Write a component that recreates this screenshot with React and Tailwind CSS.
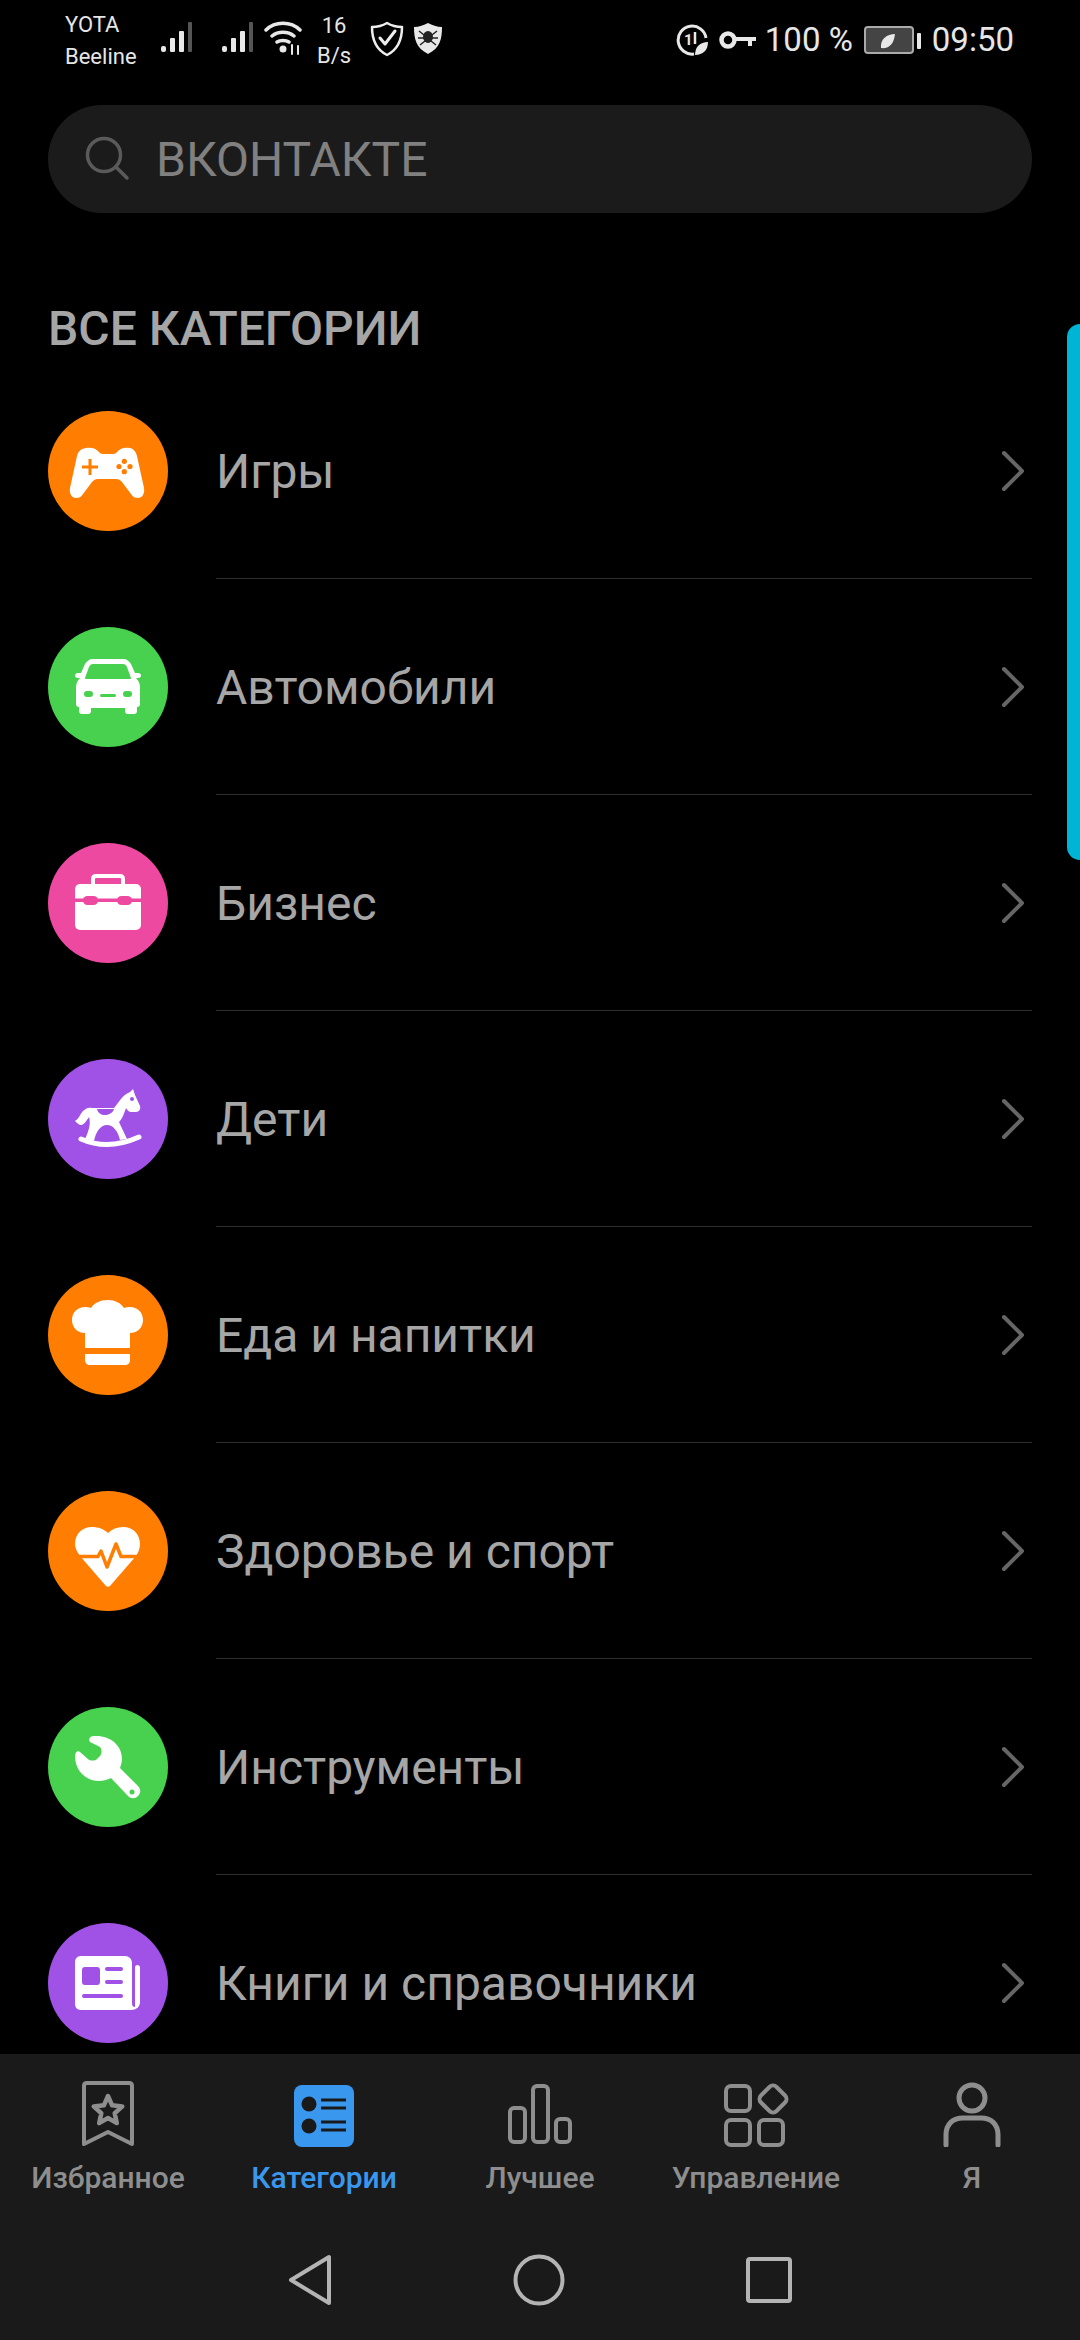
const CATEGORIES = [
  { label: 'Игры', color: 'bg-[#ff7d00]', tint: '#ff7d00', icon: 'game' },
  { label: 'Автомобили', color: 'bg-[#47d14e]', tint: '#47d14e', icon: 'car' },
  { label: 'Бизнес', color: 'bg-[#ee49a0]', tint: '#ee49a0', icon: 'case' },
  { label: 'Дети', color: 'bg-[#a052e6]', tint: '#a052e6', icon: 'horse' },
  { label: 'Еда и напитки', color: 'bg-[#ff7d00]', tint: '#ff7d00', icon: 'chef' },
  { label: 'Здоровье и спорт', color: 'bg-[#ff7d00]', tint: '#ff7d00', icon: 'heart' },
  { label: 'Инструменты', color: 'bg-[#47d14e]', tint: '#47d14e', icon: 'wrench' },
  { label: 'Книги и справочники', color: 'bg-[#a052e6]', tint: '#a052e6', icon: 'news' },
]

function CategoryIcon({ name, tint }) {
  if (name === 'game') return (
    <svg viewBox="0 0 120 120" className="w-full h-full">
      <path fill="#fff" d="M38 37c5-1 10 0 13 4 1 1 2 2 4 2h10c2 0 3-1 4-2 3-4 8-5 13-4 4 1 6 4 7 8l7 32c1 6-2 10-6 10-3 0-5-1-7-4l-9-12c-2-2-3-3-6-3H50c-3 0-4 1-6 3l-9 12c-2 3-4 4-7 4-4 0-7-4-6-10l7-32c1-4 3-7 9-8z" />
      <path stroke={tint} strokeWidth="3" d="M34 56h16M42 48v16" />
      <circle cx="76.300" cy="50.300" r="2.600" fill={tint} /><circle cx="76.300" cy="60.700" r="2.600" fill={tint} />
      <circle cx="71" cy="55.500" r="2.600" fill={tint} /><circle cx="82" cy="55.500" r="2.600" fill={tint} />
    </svg>
  )
  if (name === 'car') return (
    <svg viewBox="0 0 120 120" className="w-full h-full">
      <path fill="#fff" d="M45 32H75C79 32 81 34 83 37L87 46H90C92 46 93 47 93 48.500C93 50 92 51 90 51H88C90 53 92 56 92 60V77C92 79 91 80 89 80V84C89 86 88 87 86 87H80C78 87 77 86 77 84V81H43V84C43 86 42 87 40 87H34C32 87 31 86 31 84V80C29 80 28 79 28 77V60C28 56 30 53 32 51H30C28 51 27 50 27 48.500C27 47 28 46 30 46H33L37 37C39 34 41 32 45 32Z" />
      <path fill={tint} d="M45 37C43 37 42 38 41 40L37 51C37 52 38 52 38 52H82C83 52 83 51 83 51L79 40C78 38 77 37 75 37Z" />
      <rect x="36" y="64" width="9" height="6" rx="3" fill={tint} />
      <rect x="75" y="64" width="9" height="6" rx="3" fill={tint} />
      <rect x="52" y="67" width="16" height="3" rx="1.500" fill={tint} />
    </svg>
  )
  if (name === 'case') return (
    <svg viewBox="0 0 120 120" className="w-full h-full">
      <path fill="none" stroke="#fff" strokeWidth="4" d="M45 42V36c0-2 1-3 3-3h24c2 0 3 1 3 3v6" />
      <rect x="27" y="41" width="66" height="46" rx="5" fill="#fff" />
      <rect x="27" y="55.500" width="66" height="3.500" fill={tint} />
      <rect x="35" y="53" width="15" height="9" rx="4.500" fill={tint} />
      <rect x="69" y="53" width="15" height="9" rx="4.500" fill={tint} />
    </svg>
  )
  if (name === 'horse') return (
    <svg viewBox="0 0 120 120" className="w-full h-full">
      <path fill="#fff" d="M85 30L87 36L92 47C93 50 91 53 88 53H83C81 53 79 51 78 49C76 55 74 60 71 63L79 80L72 81C70 72 65 66 59 66C53 66 48 72 46 82L37 80C41 72 43 64 41 58C39 61 36 66 33 66C31 66 29 64 27 62C31 60 32 55 35 52C38 49 41 48 44 49H66C69 46 74 36 82 33Z" />
      <path fill={tint} d="M49 50H66C65 54 60 56 57 56C53 56 50 54 49 50Z" />
      <circle cx="84" cy="40" r="2" fill={tint} />
      <path fill="none" stroke="#fff" strokeWidth="5" strokeLinecap="round" d="M33 80Q60 92 91 78" />
    </svg>
  )
  if (name === 'chef') return (
    <svg viewBox="0 0 120 120" className="w-full h-full">
      <path fill="#fff" d="M37 73V58C29 58 24 52 24 45C24 37 30 32 37 32C39 32 41 32 43 33C46 28 52 25 60 25C67 25 73 28 76 33C78 32 80 32 82 32C89 32 95 37 95 45C95 52 90 58 82 58V73Z" />
      <path fill="#fff" d="M37 79H82V85C82 88 80 90 77 90H42C39 90 37 88 37 85Z" />
    </svg>
  )
  if (name === 'heart') return (
    <svg viewBox="0 0 120 120" className="w-full h-full">
      <path fill="#fff" d="M60 42C64 38 69 36 75 36C85 36 92 43 92 53C92 58 90 62 88 65L62 95C61 96 59 96 58 95L32 65C29 61 27 57 27 53C27 43 34 36 44 36C50 36 56 38 60 42Z" />
      <path fill="none" stroke={tint} strokeWidth="3.500" strokeLinejoin="round" d="M20 65.500H50L53 60L59 76L68 53L73 65.500H100" />
    </svg>
  )
  if (name === 'wrench') return (
    <svg viewBox="0 0 120 120" className="w-full h-full">
      <path fill="#fff" d="M42 35C40 32 42 29 46 29C62 28 74 38 74 52C74 55 73 58 72 61L90 79C93 82 93 86 90 89C87 92 83 92 80 89L63 71C59 73 55 74 51 74C37 74 27 63 27 49C27 45 30 43 32 45L40 52C42 54 47 54 49 52L52 49C54 47 54 42 52 40Z" />
      <circle cx="84" cy="85" r="2.500" fill={tint} />
    </svg>
  )
  return (
    <svg viewBox="0 0 120 120" className="w-full h-full">
      <path fill="#fff" d="M33 33H77C81 33 84 36 84 40V80C84 83 85 84 87 84C87 80 87 46 87 44.500C87 43 88 42 89.500 42C91 42 92 43 92 44.500V79C92 84 88 87 83 87H33C29 87 27 84 27 81V39C27 36 29 33 33 33Z" />
      <rect x="34" y="44" width="18" height="18" rx="3" fill={tint} />
      <rect x="57" y="44" width="18" height="4" rx="2" fill={tint} />
      <rect x="57" y="57" width="18" height="4" rx="2" fill={tint} />
      <rect x="34" y="71" width="41" height="4" rx="2" fill={tint} />
    </svg>
  )
}

function Signal() {
  return (
    <svg width="32" height="32" viewBox="0 0 32 32">
      <rect x="0" y="24" width="5" height="6" rx="2" fill="#e8e8e8" />
      <rect x="9" y="16" width="5" height="14" rx="1" fill="#e8e8e8" />
      <rect x="18" y="9" width="5" height="21" rx="1" fill="#e8e8e8" />
      <rect x="27" y="0" width="4" height="30" rx="1" fill="#555" />
    </svg>
  )
}

function StatusBar() {
  return (
    <div className="h-[105px] flex items-start justify-between pl-[65px] pr-[66px] pt-[9px] text-[#e6e6e6] shrink-0">
      <div className="flex items-start">
        <div className="text-[22px] leading-[32px] w-[90px]">
          <div>YOTA</div>
          <div>Beeline</div>
        </div>
        <div className="flex items-start pt-[13px] ml-[6px]">
          <Signal />
          <div className="w-[29px]" />
          <Signal />
          <svg width="38" height="34" viewBox="0 0 38 34" className="ml-[10px] mt-[-1px]" fill="none" stroke="#e8e8e8" strokeWidth="3.500" strokeLinecap="round">
            <path d="M2 9c9-9 25-9 34 0M8 15c6-5 16-5 22 0M13 21c3-2 9-2 12 0" />
            <circle cx="19" cy="28" r="3.500" fill="#e8e8e8" stroke="none" />
            <path strokeWidth="2" d="M28 24v9M34 25v8" />
          </svg>
        </div>
        <div className="text-[22px] leading-[30px] text-center w-[50px] ml-[7px] pt-[2px]">
          <div>16</div>
          <div>B/s</div>
        </div>
        <svg width="34" height="36" viewBox="0 0 34 36" className="ml-[11px] mt-[12px]" fill="none" stroke="#eee" strokeWidth="2.500" strokeLinecap="round" strokeLinejoin="round">
          <path d="M17 2c5 3 10 4 15 4 0 12-3 22-15 28C5 28 2 18 2 6c5 0 10-1 15-4z" />
          <path strokeWidth="3" d="M10 17l5 6 10-13" />
        </svg>
        <svg width="30" height="32" viewBox="0 0 28 32" className="ml-[9px] mt-[13px]">
          <path fill="#e8e8e8" d="M14 1c4 2 9 4 14 4 0 12-2 21-14 27C2 26 0 17 0 5c5 0 10-2 14-4z" />
          <ellipse cx="14" cy="15" rx="5" ry="6" fill="#222" />
          <path stroke="#222" strokeWidth="1.500" d="M5 9l5 4M23 9l-5 4M4 16h6M24 16h-6M6 23l5-4M22 23l-5-4" />
        </svg>
      </div>
      <div className="flex items-center pt-[12px] h-[50px]">
        <svg width="32" height="32" viewBox="0 0 32 32" fill="none" className="mr-[11px]">
          <path stroke="#e8e8e8" strokeWidth="3" d="M18 30A14 14 0 1 1 30 14" />
          <text x="8" y="21" fontSize="15" fill="#e8e8e8" fontFamily="Roboto, sans-serif" fontWeight="700">1</text>
          <path stroke="#e8e8e8" strokeWidth="2.500" d="M19 8v12" />
          <path fill="#e8e8e8" d="M19 31c0-8 5-13 13-13 0 8-5 13-13 13z" />
        </svg>
        <svg width="38" height="20" viewBox="0 0 38 20" fill="none" className="mr-[8px]">
          <circle cx="9" cy="10" r="6.500" stroke="#e8e8e8" strokeWidth="4.500" />
          <path stroke="#e8e8e8" strokeWidth="4" d="M15 9h22M31 9v7" />
        </svg>
        <span className="text-[33px] leading-[40px] mr-[11px]">100 %</span>
        <svg width="57" height="30" viewBox="0 0 57 30" fill="none" className="mr-[11px]">
          <rect x="1" y="2" width="48" height="26" rx="3" fill="#444" stroke="#aaa" strokeWidth="2" />
          <rect x="53" y="8" width="4" height="16" rx="1" fill="#e8e8e8" />
          <path fill="#e8e8e8" d="M17 23c-1-9 6-14 14-14-1 10-6 15-14 14z" />
        </svg>
        <span className="text-[33px] leading-[40px]">09:50</span>
      </div>
    </div>
  )
}

function CategoryRow({ item }) {
  return (
    <div className="h-[216px] flex items-stretch shrink-0">
      <div className="w-[168px] pl-[48px] flex items-center shrink-0">
        <div className={`w-[120px] h-[120px] rounded-full ${item.color}`}>
          <CategoryIcon name={item.icon} tint={item.tint} />
        </div>
      </div>
      <div className="flex-1 ml-[48px] mr-[48px] flex items-center justify-between border-b border-[#303030]">
        <span className="text-[48px] text-[#a6a6a6] pt-[2px]">{item.label}</span>
        <svg width="24" height="42" viewBox="0 0 24 42" fill="none" stroke="#666" strokeWidth="4" strokeLinecap="round" strokeLinejoin="round" className="mr-[7px]">
          <path d="M3 3L21 21L3 39" />
        </svg>
      </div>
    </div>
  )
}

const TABS = [
  { label: 'Избранное', icon: 'star' },
  { label: 'Категории', icon: 'list', active: true },
  { label: 'Лучшее', icon: 'bars' },
  { label: 'Управление', icon: 'apps' },
  { label: 'Я', icon: 'user' },
]

function TabIcon({ name }) {
  const common = { width: 66, height: 66, viewBox: '0 0 66 66', fill: 'none', stroke: '#8e8e8e', strokeWidth: 4, strokeLinejoin: 'round', strokeLinecap: 'round' }
  if (name === 'star') return (
    <svg {...common}>
      <path d="M12 2h42c2 0 3 1 3 3v58L33 51 9 63V5c0-2 1-3 3-3z" />
      <path strokeWidth="4.500" d="M33 15L37.100 24.300L47.300 25.400L39.700 32.200L41.800 42.100L33 37L24.200 42.100L26.300 32.200L18.700 25.400L28.900 24.300Z" />
    </svg>
  )
  if (name === 'list') return (
    <svg width="66" height="66" viewBox="0 0 66 66">
      <rect x="3" y="4" width="60" height="62" rx="8" fill="#3a97ee" />
      <circle cx="18" cy="23" r="7.500" fill="#1a1a1a" /><circle cx="18" cy="45" r="7.500" fill="#1a1a1a" />
      <path stroke="#1a1a1a" strokeWidth="3" d="M30 19h25M30 27h25M30 41h25M30 49h25" />
    </svg>
  )
  if (name === 'bars') return (
    <svg {...common}>
      <rect x="3" y="27" width="15" height="34" rx="4" />
      <rect x="26" y="5" width="15" height="56" rx="4" />
      <rect x="49" y="38" width="14" height="23" rx="4" />
    </svg>
  )
  if (name === 'apps') return (
    <svg {...common}>
      <rect x="3" y="5" width="24" height="25" rx="5" />
      <rect x="3" y="39" width="24" height="25" rx="5" />
      <rect x="36" y="39" width="24" height="25" rx="5" />
      <rect x="39" y="7" width="22" height="22" rx="5" transform="rotate(45 50 18)" />
    </svg>
  )
  return (
    <svg {...common} strokeWidth="5">
      <circle cx="33" cy="17" r="13" />
      <path d="M7 64V54c0-11 7-17 17-17h18c10 0 17 6 17 17v10" />
    </svg>
  )
}

function BottomBar() {
  return (
    <div className="h-[286px] bg-[#1a1a1a] shrink-0 flex flex-col">
      <div className="flex h-[124px] mt-[27px]">
        {TABS.map((t) => (
          <div key={t.label} className="flex-1 flex flex-col items-center">
            <TabIcon name={t.icon} />
            <span className={`text-[30px] leading-[36px] mt-[13px] font-medium ${t.active ? 'text-[#3a97ee]' : 'text-[#8e8e8e]'}`}>{t.label}</span>
          </div>
        ))}
      </div>
      <div className="flex justify-center items-center gap-[181px] mt-[49px]">
        <svg width="44" height="52" viewBox="0 0 44 52" fill="none" stroke="#b4b4b4" strokeWidth="4" strokeLinejoin="round"><path d="M41 3v46L3 26z" /></svg>
        <svg width="52" height="52" viewBox="0 0 52 52" fill="none" stroke="#b4b4b4" strokeWidth="4"><circle cx="26" cy="26" r="23.500" /></svg>
        <svg width="46" height="46" viewBox="0 0 46 46" fill="none" stroke="#b4b4b4" strokeWidth="4" strokeLinejoin="round"><rect x="2" y="2" width="42" height="42" rx="2" /></svg>
      </div>
    </div>
  )
}

export default function App() {
  return (
    <div className="relative w-[1080px] h-[2340px] bg-black flex flex-col overflow-hidden font-['Roboto',sans-serif]">
      <StatusBar />
      <div className="mx-[48px] h-[108px] rounded-full bg-[#1b1b1b] flex items-center pl-[36px] shrink-0">
        <svg width="48" height="48" viewBox="0 0 48 48" fill="none" stroke="#5a5a5a" strokeWidth="3.500" strokeLinecap="round">
          <circle cx="20" cy="20" r="16.500" />
          <path d="M32 32l11 11" />
        </svg>
        <span className="text-[48px] text-[#808080] ml-[24px] pt-[2px]">ВКОНТАКТЕ</span>
      </div>
      <h2 className="text-[48px] leading-[52px] font-medium text-[#a6a6a6] ml-[48px] mt-[90px] mb-[8px] shrink-0">ВСЕ КАТЕГОРИИ</h2>
      <div className="flex-1 min-h-0 overflow-hidden flex flex-col">
        {CATEGORIES.map((c) => <CategoryRow key={c.label} item={c} />)}
      </div>
      <div className="absolute right-0 top-[324px] w-[13px] h-[536px] rounded-l-[13px] bg-[#00b4d6]" />
      <BottomBar />
    </div>
  )
}
